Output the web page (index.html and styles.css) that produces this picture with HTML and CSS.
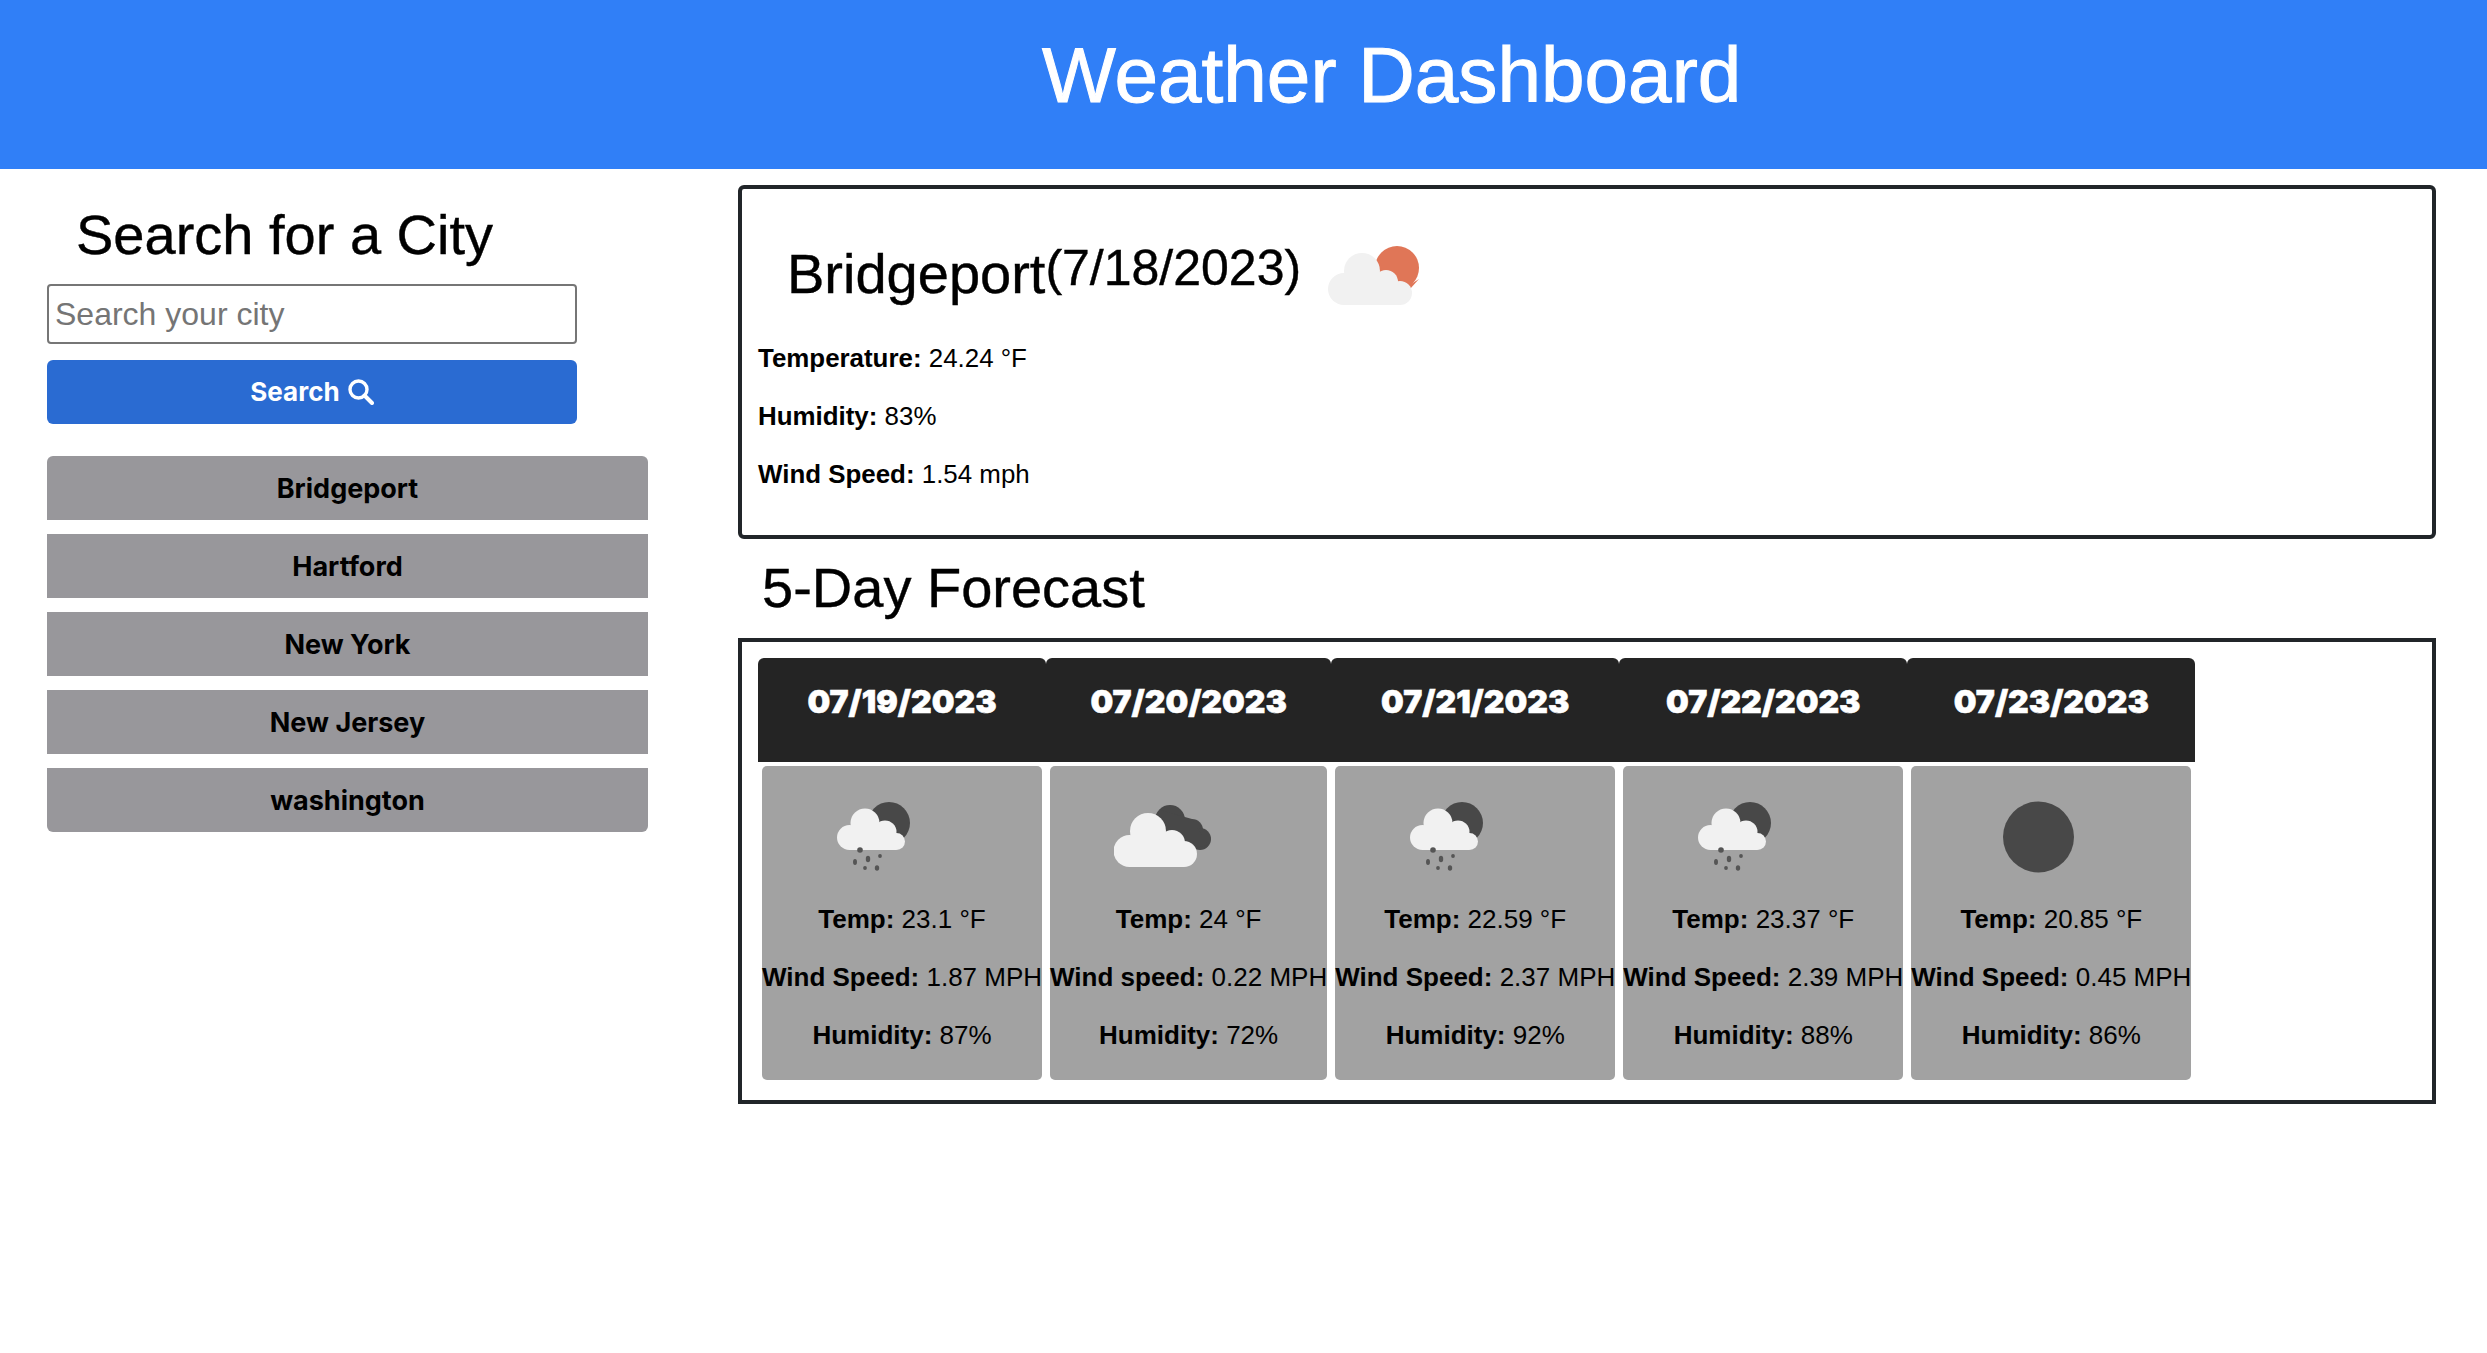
FILE: index.html
```html
<!DOCTYPE html>
<html lang="en">
<head>
<meta charset="utf-8">
<title>Weather Dashboard</title>
<link rel="stylesheet" href="styles.css">
</head>
<body>
<svg class="defs" width="0" height="0" aria-hidden="true">
  <symbol id="rain" viewBox="826 773 128 128">
    <circle cx="889" cy="823" r="21" fill="#484848"/>
    <g fill="#f1f1f1">
      <circle cx="849.5" cy="837.5" r="12.5"/>
      <circle cx="865" cy="823" r="14.5"/>
      <circle cx="885" cy="832" r="11.5"/>
      <circle cx="896.5" cy="841.5" r="8.5"/>
      <rect x="849" y="830" width="47" height="20"/>
    </g>
    <g fill="#555">
      <circle cx="860" cy="850" r="2.8"/>
      <ellipse cx="855" cy="862" rx="2" ry="3"/>
      <ellipse cx="868" cy="859" rx="2.2" ry="3.2"/>
      <circle cx="880" cy="856" r="1.9"/>
      <circle cx="865" cy="868" r="1.9"/>
      <ellipse cx="877" cy="868" rx="2.2" ry="2.8"/>
    </g>
  </symbol>
  <symbol id="clouds" viewBox="1114 773 128 128">
    <g fill="#484848">
      <circle cx="1170" cy="820" r="15"/>
      <circle cx="1192" cy="830" r="11"/>
      <circle cx="1200" cy="839" r="11"/>
      <path d="M1160 810 L1192 819 L1208 845 L1190 850 Z"/>
    </g>
    <g fill="#f1f1f1">
      <circle cx="1129.5" cy="851" r="16"/>
      <circle cx="1148" cy="831" r="18"/>
      <circle cx="1172" cy="843" r="13"/>
      <circle cx="1184" cy="854" r="13"/>
      <rect x="1129" y="840" width="55" height="27"/>
    </g>
  </symbol>
  <symbol id="night" viewBox="0 0 128 128">
    <circle cx="63.5" cy="64" r="35.5" fill="#484848"/>
  </symbol>
</svg>

<header class="topbar">
  <h1 class="title">Weather Dashboard</h1>
</header>

<div class="layout">
  <aside class="sidebar">
    <h2 class="heading sidebar-heading">Search for a City</h2>
    <input class="search-input" type="text" placeholder="Search your city">
    <button class="search-btn" type="button">Search
      <svg class="search-icon" viewBox="0 0 26 26" width="26" height="26" aria-hidden="true">
        <circle cx="10.5" cy="10.5" r="8.5" fill="none" stroke="#fff" stroke-width="3.4"/>
        <path d="M16.5 16.5 L24 24" stroke="#fff" stroke-width="4" stroke-linecap="round"/>
      </svg>
    </button>
    <div class="history">
      <button class="city-btn" type="button">Bridgeport</button>
      <button class="city-btn" type="button">Hartford</button>
      <button class="city-btn" type="button">New York</button>
      <button class="city-btn" type="button">New Jersey</button>
      <button class="city-btn" type="button">washington</button>
    </div>
  </aside>

  <main class="content">
    <section class="panel current">
      <div class="current-head">
        <h2 class="heading current-city">Bridgeport</h2>
        <span class="current-date">(7/18/2023)</span>
        <svg class="current-icon" viewBox="1320 240 110 68" width="110" height="68" aria-hidden="true">
          <circle cx="1397" cy="269" r="22" fill="#e07657"/>
          <path d="M1410 290 L1419 280 L1400 292 Z" fill="#e07657"/>
          <g fill="#f1f1f1">
            <circle cx="1344" cy="290" r="16"/>
            <circle cx="1362" cy="272" r="18"/>
            <circle cx="1386" cy="283" r="12"/>
            <circle cx="1400" cy="294" r="12"/>
            <rect x="1344" y="285" width="56" height="21"/>
          </g>
        </svg>
      </div>
      <p class="stat"><b>Temperature:</b> 24.24 °F</p>
      <p class="stat"><b>Humidity:</b> 83%</p>
      <p class="stat"><b>Wind Speed:</b> 1.54 mph</p>
    </section>

    <h2 class="heading forecast-heading">5-Day Forecast</h2>

    <section class="panel forecast">
      <article class="day">
        <div class="day-date">07/19/2023</div>
        <div class="day-card">
          <svg class="day-icon" width="128" height="128" aria-hidden="true"><use href="#rain"/></svg>
          <p class="day-line"><b>Temp:</b> 23.1 °F</p>
          <p class="day-line"><b>Wind Speed:</b> 1.87 MPH</p>
          <p class="day-line"><b>Humidity:</b> 87%</p>
        </div>
      </article>
      <article class="day">
        <div class="day-date">07/20/2023</div>
        <div class="day-card">
          <svg class="day-icon" width="128" height="128" aria-hidden="true"><use href="#clouds"/></svg>
          <p class="day-line"><b>Temp:</b> 24 °F</p>
          <p class="day-line"><b>Wind speed:</b> 0.22 MPH</p>
          <p class="day-line"><b>Humidity:</b> 72%</p>
        </div>
      </article>
      <article class="day">
        <div class="day-date">07/21/2023</div>
        <div class="day-card">
          <svg class="day-icon" width="128" height="128" aria-hidden="true"><use href="#rain"/></svg>
          <p class="day-line"><b>Temp:</b> 22.59 °F</p>
          <p class="day-line"><b>Wind Speed:</b> 2.37 MPH</p>
          <p class="day-line"><b>Humidity:</b> 92%</p>
        </div>
      </article>
      <article class="day">
        <div class="day-date">07/22/2023</div>
        <div class="day-card">
          <svg class="day-icon" width="128" height="128" aria-hidden="true"><use href="#rain"/></svg>
          <p class="day-line"><b>Temp:</b> 23.37 °F</p>
          <p class="day-line"><b>Wind Speed:</b> 2.39 MPH</p>
          <p class="day-line"><b>Humidity:</b> 88%</p>
        </div>
      </article>
      <article class="day">
        <div class="day-date">07/23/2023</div>
        <div class="day-card">
          <svg class="day-icon" width="128" height="128" aria-hidden="true"><use href="#night"/></svg>
          <p class="day-line"><b>Temp:</b> 20.85 °F</p>
          <p class="day-line"><b>Wind Speed:</b> 0.45 MPH</p>
          <p class="day-line"><b>Humidity:</b> 86%</p>
        </div>
      </article>
    </section>
  </main>
</div>
</body>
</html>
```
FILE: styles.css
```css
* { box-sizing: border-box; }
html, body { margin: 0; padding: 0; }
body {
  font-family: "Liberation Sans", Arial, sans-serif;
  color: #000;
  background: #fff;
}
.defs { position: absolute; }

.topbar {
  height: 169px;
  background: #307ff7;
  padding: 24px 0 0 1042px;
}
.title {
  margin: 0;
  font-size: 78.3px;
  font-weight: 400;
  line-height: 102px;
  color: #fff;
  white-space: nowrap;
  -webkit-text-stroke: 1px #fff;
}

.layout { display: flex; align-items: flex-start; }

.sidebar {
  width: 738px;
  flex: none;
  padding: 32px 0 0 47px;
}
.heading {
  margin: 0;
  font-size: 56px;
  font-weight: 400;
  line-height: 67px;
  white-space: nowrap;
  -webkit-text-stroke: 0.4px #000;
}
.sidebar-heading { margin-left: 29px; }

.search-input {
  display: block;
  width: 530px;
  height: 60px;
  margin-top: 16px;
  padding: 0 6px;
  border: 2px solid #767676;
  border-radius: 4px;
  font-family: inherit;
  font-size: 32px;
  background: #fff;
}
.search-input::placeholder { color: #757575; opacity: 1; }

.search-btn {
  display: flex;
  align-items: center;
  justify-content: center;
  gap: 8px;
  width: 530px;
  height: 64px;
  margin-top: 16px;
  padding-bottom: 2px;
  border: 0;
  border-radius: 6px;
  background: #2a6bd2;
  color: #fff;
  font-family: Inter, sans-serif;
  font-weight: 700;
  font-size: 26px;
}
.search-icon { display: block; }

.history {
  display: flex;
  flex-direction: column;
  gap: 14px;
  width: 601px;
  margin-top: 32px;
}
.city-btn {
  height: 64px;
  border: 0;
  background: #98979b;
  color: #000;
  font-family: Inter, sans-serif;
  font-weight: 700;
  font-size: 27px;
}
.city-btn:first-child { border-radius: 6px 6px 0 0; }
.city-btn:last-child { border-radius: 0 0 6px 6px; }

.content {
  width: 1698px;
  flex: none;
  padding-top: 16px;
}
.panel {
  border: 4px solid #212529;
}
.current {
  padding: 47px 16px 22px;
  border-radius: 6px;
}
.current-head {
  display: flex;
  align-items: flex-start;
}
.current-city { margin: 4px 0 0 29px; }
.current-date {
  margin-top: 2px;
  font-size: 50px;
  line-height: 60px;
  white-space: nowrap;
  -webkit-text-stroke: 0.4px #000;
}
.current-icon { display: block; margin: 3px 0 0 19px; }

.stat {
  margin: 0 0 20px;
  font-size: 25.9px;
  line-height: 38px;
}
.stat:first-of-type { margin-top: 32px; }

.forecast-heading { margin: 15px 0 17px 24px; }

.forecast {
  display: flex;
  align-items: flex-start;
  padding: 16px;
}
.day { flex: none; }
.day-date {
  height: 104px;
  padding-top: 25px;
  background: #242424;
  border-radius: 6px 6px 0 0;
  color: #fff;
  font-family: Inter, sans-serif;
  font-weight: 900;
  font-size: 32px;
  line-height: 38px;
  text-align: center;
  -webkit-text-stroke: 0.6px #fff;
}
.day-card {
  margin: 4px;
  padding: 7px 0 6px;
  background: #a2a2a2;
  border-radius: 5px;
  text-align: center;
}
.day-icon {
  display: block;
  margin: 0 0 -1px 64px;
  filter: blur(0.5px);
}
.day-line {
  margin: 0 0 20px;
  font-size: 26px;
  line-height: 38px;
  white-space: nowrap;
}
```
